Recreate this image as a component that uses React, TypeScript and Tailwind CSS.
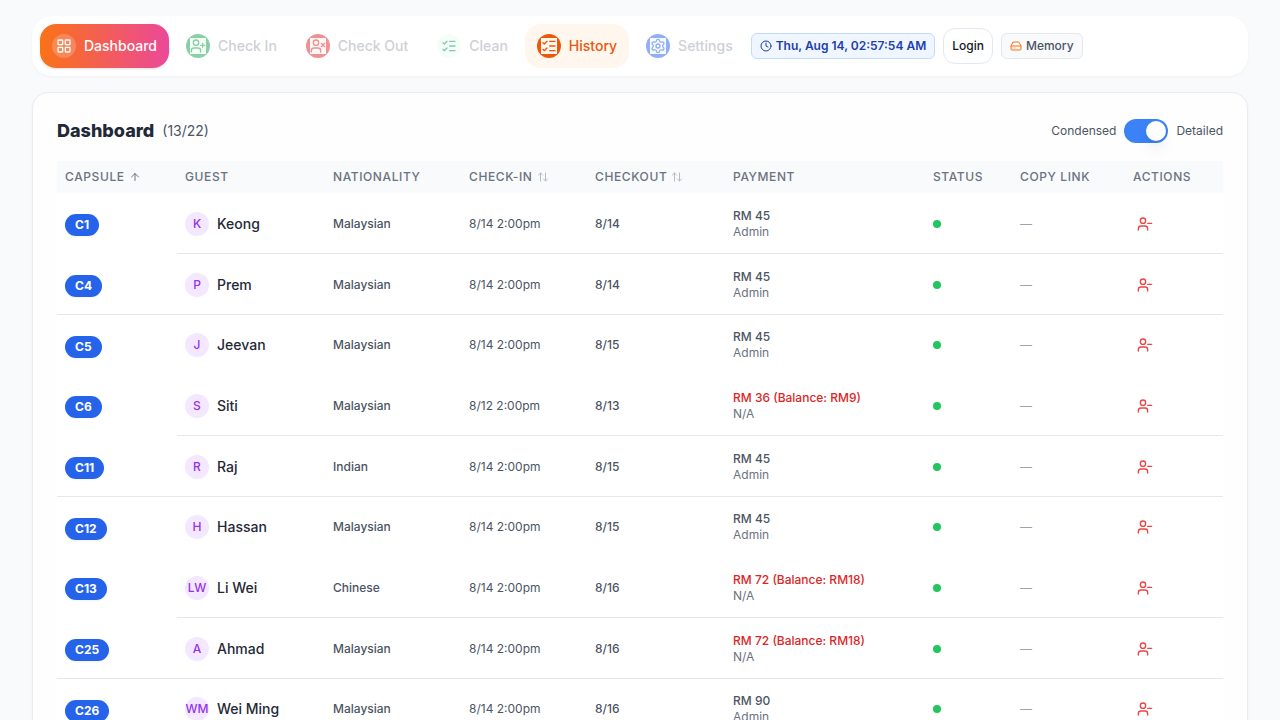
import React, { useState } from 'react'
import { LayoutGrid, Settings, Clock, ListChecks, HardDrive, ArrowUp, UserPlus, UserMinus, UserX } from 'lucide-react'

function SortArrows() {
  return (
    <svg viewBox="0 0 24 24" fill="none" stroke="currentColor" strokeWidth="2" strokeLinecap="round" strokeLinejoin="round" className="size-3 text-[#b6bac2]" aria-hidden="true">
      <path d="M7 20V4M3 8l4-4 4 4M17 4v16M13 16l4 4 4-4" />
    </svg>
  )
}

const navBase = 'flex h-11 items-center gap-2 rounded-2xl px-3 text-sm font-medium'

const nav = [
  { label: 'Dashboard', item: 'bg-linear-to-r/srgb from-[#f97316] to-[#ec4899] text-white shadow-sm', disc: 'bg-white/20', icon: <LayoutGrid className="size-4" /> },
  { label: 'Check In', item: 'text-[#9ca3af] opacity-50', disc: 'bg-[#16a34a] text-[#16a34a]', icon: <UserPlus className="size-4 bg-[#f0fdf4]" /> },
  { label: 'Check Out', item: 'text-[#9ca3af] opacity-50', disc: 'bg-[#dc2626] text-[#dc2626]', icon: <UserX className="size-4 bg-[#fef2f2]" /> },
  { label: 'Clean', item: 'text-[#9ca3af] opacity-50', disc: 'bg-[#ecfdf5] text-[#059669]', icon: <ListChecks className="size-4" /> },
  { label: 'History', item: 'bg-[#fff7ed] text-[#ea580c]', disc: 'bg-[#ea580c] text-[#ea580c]', icon: <ListChecks className="size-4 bg-[#fff7ed]" /> },
  { label: 'Settings', item: 'text-[#9ca3af] opacity-50', disc: 'bg-[#2563eb] text-[#2563eb]', icon: <Settings className="size-4 bg-[#eff6ff]" /> },
]

type Line = 'partial' | 'full' | 'none'
type Guest = { capsule: string; initials: string; name: string; nation: string; checkin: string; checkout: string; pay: string; by: string; due?: boolean; line: Line }

const guests: Guest[] = [
  { capsule: 'C1', initials: 'K', name: 'Keong', nation: 'Malaysian', checkin: '8/14 2:00pm', checkout: '8/14', pay: 'RM 45', by: 'Admin', line: 'partial' },
  { capsule: 'C4', initials: 'P', name: 'Prem', nation: 'Malaysian', checkin: '8/14 2:00pm', checkout: '8/14', pay: 'RM 45', by: 'Admin', line: 'full' },
  { capsule: 'C5', initials: 'J', name: 'Jeevan', nation: 'Malaysian', checkin: '8/14 2:00pm', checkout: '8/15', pay: 'RM 45', by: 'Admin', line: 'none' },
  { capsule: 'C6', initials: 'S', name: 'Siti', nation: 'Malaysian', checkin: '8/12 2:00pm', checkout: '8/13', pay: 'RM 36 (Balance: RM9)', by: 'N/A', due: true, line: 'partial' },
  { capsule: 'C11', initials: 'R', name: 'Raj', nation: 'Indian', checkin: '8/14 2:00pm', checkout: '8/15', pay: 'RM 45', by: 'Admin', line: 'full' },
  { capsule: 'C12', initials: 'H', name: 'Hassan', nation: 'Malaysian', checkin: '8/14 2:00pm', checkout: '8/15', pay: 'RM 45', by: 'Admin', line: 'none' },
  { capsule: 'C13', initials: 'LW', name: 'Li Wei', nation: 'Chinese', checkin: '8/14 2:00pm', checkout: '8/16', pay: 'RM 72 (Balance: RM18)', by: 'N/A', due: true, line: 'partial' },
  { capsule: 'C25', initials: 'A', name: 'Ahmad', nation: 'Malaysian', checkin: '8/14 2:00pm', checkout: '8/16', pay: 'RM 72 (Balance: RM18)', by: 'N/A', due: true, line: 'full' },
  { capsule: 'C26', initials: 'WM', name: 'Wei Ming', nation: 'Malaysian', checkin: '8/14 2:00pm', checkout: '8/16', pay: 'RM 90', by: 'Admin', line: 'none' },
]

const th = 'px-2 text-left font-medium'
const sortButton = 'flex items-center gap-1 tracking-wider uppercase'

function GuestRow({ g }: { g: Guest }) {
  const first = g.line === 'full' ? 'border-b border-[#e5e7eb] px-2 pt-[3px]' : 'px-2 pt-[3px]'
  const cell = g.line === 'none' ? 'px-2 py-px' : 'border-b border-[#e5e7eb] px-2 pt-0.5'
  return (
    <tr className="bg-white">
      <td className={first}>
        <span className="inline-flex rounded-full bg-[#2563eb] px-2.5 py-[3px] align-middle text-xs font-bold text-white shadow-xs">{g.capsule}</span>
      </td>
      <td className={cell}>
        <div className="flex items-center gap-2">
          <span className="flex size-6 shrink-0 items-center justify-center rounded-full bg-[#f3e8ff] text-xs font-medium text-[#9333ea]">{g.initials}</span>
          <span className="text-sm font-medium text-[#1f2937]">{g.name}</span>
        </div>
      </td>
      <td className={cell}><span className="font-medium">{g.nation}</span></td>
      <td className={cell}>{g.checkin}</td>
      <td className={cell}><span className="font-medium">{g.checkout}</span></td>
      <td className={cell}>
        <div className="py-[13px]">
          <div className={g.due ? 'font-medium text-[#dc2626]' : 'font-medium'}>{g.pay}</div>
          <div className="text-[#6b7280]">{g.by}</div>
        </div>
      </td>
      <td className={cell}><span className="block size-2 rounded-full bg-[#22c55e]" role="img" aria-label="Active" /></td>
      <td className={cell}><span className="text-[#9ca3af]">—</span></td>
      <td className={cell}>
        <button type="button" aria-label={'Check out ' + g.name} className="flex size-6 items-center justify-center text-[#ef4444]">
          <UserMinus className="size-4" />
        </button>
      </td>
    </tr>
  )
}

export default function App() {
  const [detailed, setDetailed] = useState(true)
  return (
    <div className="min-h-screen bg-[#f8fafc] px-8 py-4 font-['Inter',sans-serif] text-[#1f2937]">
      <nav className="flex items-center gap-[6px] rounded-[20px] bg-white p-2 shadow-[0_1px_3px_rgba(0,0,0,0.04)]">
        <div className="flex items-center gap-[5px]">
          {nav.map((n) => (
            <a key={n.label} href="#" className={`${navBase} ${n.item}`}>
              <span className={`flex size-6 items-center justify-center rounded-full ${n.disc}`}>{n.icon}</span>
              {n.label}
            </a>
          ))}
        </div>
        <div className="flex items-center gap-2">
          <div className="flex items-center gap-1 rounded-md border border-[#bfdbfe] bg-[#eff6ff] px-2 py-1 text-xs font-semibold text-[#1e40af]">
            <Clock className="size-3" />
            Thu, Aug 14, 02:57:54 AM
          </div>
          <button type="button" className="h-9 rounded-xl border border-[#e2e8f0] bg-white px-2 text-xs font-medium text-[#111827]">Login</button>
          <div className="flex items-center gap-1 rounded-md border border-[#e5e7eb] bg-[#f9fafb] px-2 py-1 text-xs font-medium text-[#4b5563]">
            <HardDrive className="size-3 text-[#f97316]" />
            Memory
          </div>
        </div>
      </nav>

      <main className="mt-4 rounded-2xl border border-[#e8edf3] bg-[#fefefe] p-6 shadow-[0_1px_3px_rgba(0,0,0,0.05)]">
        <div className="flex h-7 items-center justify-between">
          <h1 className="flex items-center gap-2 text-lg font-extrabold text-[#1f2937]">
            Dashboard
            <span className="text-sm font-normal text-[#4b5563]">(13/22)</span>
          </h1>
          <label className="flex items-center gap-2 text-xs text-[#4b5563]">
            Condensed
            <input type="checkbox" role="switch" aria-label="Detailed view" checked={detailed} onChange={(e) => setDetailed(e.target.checked)} className="peer sr-only" />
            <span className="flex h-6 w-11 items-center rounded-full bg-[#d1d5db] p-0.5 peer-checked:justify-end peer-checked:bg-[#3b82f6]">
              <span className="size-5 rounded-full bg-white shadow-lg" />
            </span>
            Detailed
          </label>
        </div>

        <table className="mt-4 w-full table-fixed border-separate border-spacing-0 text-xs text-[#4b5563]">
          <colgroup>
            <col className="w-[120px]" />
            <col className="w-[148px]" />
            <col className="w-[136px]" />
            <col className="w-[126px]" />
            <col className="w-[138px]" />
            <col className="w-[200px]" />
            <col className="w-[87px]" />
            <col className="w-[113px]" />
            <col className="w-[98px]" />
          </colgroup>
          <thead>
            <tr className="h-8 bg-[#f8fafc] tracking-wider text-[#6b7280] uppercase">
              <th className={th}><button type="button" className={sortButton}>Capsule<ArrowUp className="size-3" /></button></th>
              <th className={th}>Guest</th>
              <th className={th}>Nationality</th>
              <th className={th}><button type="button" className={sortButton}>Check-in<SortArrows /></button></th>
              <th className={th}><button type="button" className={sortButton}>Checkout<SortArrows /></button></th>
              <th className={th}>Payment</th>
              <th className={th}>Status</th>
              <th className={th}>Copy Link</th>
              <th className={th}>Actions</th>
            </tr>
          </thead>
          <tbody>
            {guests.map((g) => <GuestRow key={g.capsule} g={g} />)}
          </tbody>
        </table>
      </main>
    </div>
  )
}
